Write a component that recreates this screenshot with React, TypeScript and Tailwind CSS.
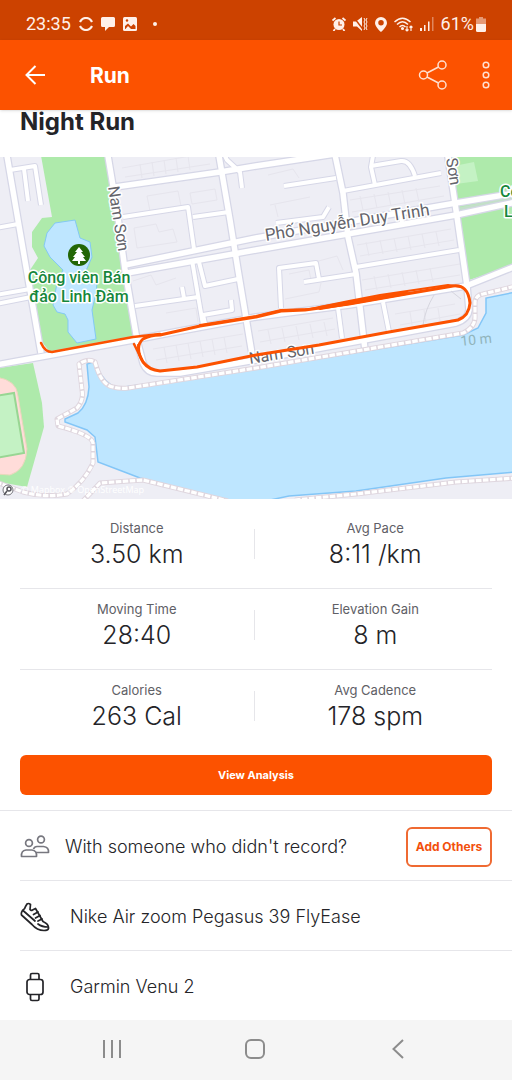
import type { ReactNode } from 'react'

type Stat = {
	label: string;
	value: string;
}

const stats: [Stat, Stat][] = [
	[{ label: 'Distance', value: '3.50 km' }, { label: 'Avg Pace', value: '8:11 /km' }],
	[{ label: 'Moving Time', value: '28:40' }, { label: 'Elevation Gain', value: '8 m' }],
	[{ label: 'Calories', value: '263 Cal' }, { label: 'Avg Cadence', value: '178 spm' }],
]

const wideRoads = [
	'M6 150L30 290L41 353',
	'M107 150L117 210L125 270L137 340',
	'M447 150L456 210L467 286',
	'M334 150L343 193L348 237L356 273L365 350',
	'M218 150L230 220L238 270L252 354',
	'M125 265L256 238L456 203L516 193',
	'M127 273L256 250L456 215L516 202',
	'M-4 365L40 357L133 340L180 331L256 317L349 305L466 286L516 266',
	'M137 340L143 363Q147 373 157 373L180 373L256 360L456 323Q468 319 469 310L467 286',
	'M115 187L220 172L256 166L335 154',
]

const narrowRoads = [
	'M-4 295L30 289', 'M-4 304L31 297', 'M-4 228L18 224',
	'M10 170L35 166L41 205', 'M24 169L28 201',
	'M123 217L188 207L194 249', 'M193 217L229 212',
	'M192 260L203 325', 'M199 262L205 286L238 279',
	'M135 306L198 297', 'M182 287L184 298', 'M203 315L232 310L231 300',
	'M222 150L227 160L240 172L242 188',
	'M284 186L336 178', 'M343 191L441 173',
	'M374 150L371 167L375 185', 'M371 166L401 161Q410 160 415 176',
	'M276 223L323 217L329 207', 'M401 212L402 223',
	'M356 267L459 250', 'M304 282L356 274', 'M281 308L279 268L316 263L319 279',
	'M338 308L342 338', 'M383 302L389 332', 'M203 315L206 328',
]

const footpaths = [
	'M-4 482L23 492Q45 498 67 494Q84 482 93 463V443Q92 435 58 426L57 419L77 408Q84 400 82 390L79 364Q88 358 95 362Q101 385 113 387Q120 389 128 388L256 368L463 333Q476 327 475 315V302Q476 295 483 294L516 286',
	'M82 502L100 483L143 480L228 501',
	'M295 500L356 494L456 482L516 478',
]

// Building outlines, drawn as slanted rows of small plots
const blocks = [
	'M122 168l80-14M125 177l85-13M140 164l2 14M152 162l2 14M164 160l2 14M176 158l2 14M188 156l2 14',
	'M147 196l31-5l3 15M147 196l3 15M190 193l25-4l2 11l-25 4z',
	'M134 228l22-4l3 8l14-3l4 13l-40 6z',
	'M133 281l18-6l5 10l20-7M166 313l30-5l2 14',
	'M268 175l25-6l6 9M270 205l40-8M275 205l3 12',
	'M350 200l90-14M352 212l92-16M360 196l3 14M374 194l3 14M388 192l3 14M402 190l3 14M416 188l3 14',
	'M357 245l94-16M360 256l94-16M366 242l3 14M380 240l3 14M394 238l3 14M408 236l3 14M422 234l3 14M436 232l3 14',
	'M362 280l98-16M365 290l95-15M374 276l3 14M388 274l3 14M402 272l3 14M416 270l3 14M430 268l3 14',
	'M153 349l90-15M156 360l86-14M164 347l3 16M176 345l3 16M188 343l3 16M200 341l3 16M212 339l3 16M224 337l3 16',
	'M258 331l75-13M260 342l75-13M268 330l3 14M282 328l3 14M296 326l3 14M310 324l3 14M324 322l3 14',
	'M289 274l20-4l2 10M285 299l34-7l2-9M315 262l22-6l6 14',
	'M395 314l60-10M400 325l60-11M410 312l2 13M424 310l2 13M438 308l2 13',
]

const park = 'M40 150H104L117 210L137 337L50 352L42 342L28 273L38 258L32 247V232L42 218L52 217Z'
const pond = 'M55 223L75 220L80 238L90 242L92 257L85 273L97 283L96 293L92 310L96 339L77 343L68 332V320L65 314L57 312L53 305L57 283L63 270L50 257L44 246L47 233Z'
const lake = 'M87 364L93 362L97 367Q104 383 117 388L256 369L463 335L478 328L486 313V298L516 292V472L446 478L356 491L289 496L256 503H240L140 478L127 473L98 462L95 437L87 430L65 422V419L78 413Q88 405 89 387Z'

function RouteMap() {
	return (
		<svg viewBox="0 157 512 342" className="block w-full" role="img" aria-label="Route map">
			<rect y="157" width="512" height="342" fill="#eeeef5" />
			<g fill="none" stroke="#e6e5ed" strokeWidth="1">
				{blocks.map(d => <path key={d} d={d} />)}
			</g>
			<path d={park} fill="#aeeaab" />
			<path d="M452 150H516V265L469 280L456 205Z" fill="#aeeaab" />
			<path d="M456 208L516 196V200L457 212Z" fill="#c3dfc9" />
			<path d="M454 166L474 162L478 181L456 184Z" fill="#c4f2c4" />
			<path d={pond} fill="#bee6ff" stroke="#83c9f3" strokeWidth="1" />
			<path d="M-2 368L33 363L42 403L44 427L27 487L-2 482Z" fill="#aeeaab" />
			<path d="M-4 377Q17 380 18 396L27 449Q26 470 10 475L-4 474Z" fill="#ffdcd9" stroke="#e8d7ba" strokeWidth="1" />
			<path d="M-4 396L14 393L24 453L-4 458Z" fill="#c4f2c4" stroke="#98d693" strokeWidth="2" />
			<path d={lake} fill="#bee6ff" stroke="#83c6f7" strokeWidth="1.5" />

			<g fill="none" stroke="#d6d7e7" strokeLinejoin="round">
				<g strokeWidth="6">{narrowRoads.map(d => <path key={d} d={d} />)}</g>
				<g strokeWidth="8">{wideRoads.map(d => <path key={d} d={d} />)}</g>
			</g>
			<g fill="none" stroke="#fff" strokeLinejoin="round">
				<g strokeWidth="4">{narrowRoads.map(d => <path key={d} d={d} />)}</g>
				<g strokeWidth="5.5">{wideRoads.map(d => <path key={d} d={d} />)}</g>
			</g>
			<g fill="none" strokeLinejoin="round">
				<g stroke="#dfd6de" strokeWidth="5">{footpaths.map(d => <path key={d} d={d} />)}</g>
				<g stroke="#fff" strokeWidth="3.2" strokeDasharray="5.5 1.5">{footpaths.map(d => <path key={d} d={d} />)}</g>
			</g>
			<path d="M434 295Q425 310 423 325M451 291L461 299" fill="none" stroke="#d6d6df" strokeWidth="1" />

			<g fontFamily="Roboto, sans-serif" fontSize="16" fill="#64646b" stroke="#fff" strokeWidth="3" strokeLinejoin="round" paintOrder="stroke">
				<text transform="translate(108 187) rotate(81)">Nam Sơn</text>
				<text transform="translate(266 241) rotate(-9)" fontSize="17">Phố Nguyễn Duy Trinh</text>
				<text transform="translate(440 121) rotate(81)">Nam Sơn</text>
				<text transform="translate(250 364) rotate(-9)">Nam Sơn</text>
				<g fill="#16873b" fontWeight="500" textAnchor="middle">
					<text x="79" y="283">Công viên Bán</text>
					<text x="79" y="302">đảo Linh Đàm</text>
					<text x="500" y="197" textAnchor="start">Công viên</text>
					<text x="504" y="217" textAnchor="start">Linh Đàm</text>
				</g>
			</g>
			<text transform="translate(461 346) rotate(-6)" fontFamily="Roboto, sans-serif" fontSize="14" fill="#91b4bb">10 m</text>

			<circle cx="79" cy="255" r="11" fill="#236605" />
			<path d="M79 247l4 5h-2l4 5h-2l3 4h-6v3h-2v-3h-6l3-4h-2l4-5h-2z" fill="#fff" />

			<g fill="none" stroke="#fc5200" strokeLinecap="round" strokeLinejoin="round">
				<path d="M41 343Q45 352 52 352L133 337L160 334" strokeWidth="2.5" />
				<path d="M134 344L142 360" strokeWidth="2.5" />
				<path d="M160 335L200 326L256 317L281 311L305 310L349 304L406 294L453 286Q468 284 470 303Q469 316 458 320L389 332L319 345L256 355L197 367L160 371Q149 370 143 362Q134 347 143 339Q150 335 160 335Z" strokeWidth="3" />
				<path d="M138 345Q139 360 147 366" strokeWidth="2" />
				<path d="M200 325L256 316L281 310L310 309L349 301L380 295L448 285L462 287" strokeWidth="2" />
				<path d="M320 308L349 303L406 293" strokeWidth="4" />
			</g>

			<circle cx="8" cy="490" r="5" fill="#fff" stroke="#76767d" strokeWidth="1" />
			<circle cx="9" cy="489" r="2" fill="none" stroke="#55555c" strokeWidth="1.5" />
			<path d="M4 495l3-4" stroke="#55555c" strokeWidth="1.5" />
			<text x="21" y="493" fontFamily="'Open Sans', sans-serif" fontSize="9" fill="#fff">© Mapbox © OpenStreetMap</text>
		</svg>
	)
}

function StatusBar() {
	return (
		<div className="flex h-10 items-center justify-between bg-[#cc4200] pt-2 pr-[26px] pl-[26px] font-[Roboto,sans-serif] text-lg text-[#fff0e9]">
			<div className="flex items-center gap-2">
				<span>23:35</span>
				<svg viewBox="0 0 14 14" className="size-3.5" fill="none" stroke="currentColor" strokeWidth="2.2">
					<path d="M1 5Q3 1 7 1T13 5M1 9Q3 13 7 13T13 9" />
				</svg>
				<svg viewBox="0 0 14 14" className="size-3.5" fill="currentColor">
					<path d="M1.500 0h11Q14 0 14 1.500v7Q14 10 12.500 10H8l-4 4v-4H1.500Q0 10 0 8.500v-7Q0 0 1.500 0z" />
				</svg>
				<svg viewBox="0 0 14 14" className="size-3.5">
					<rect width="14" height="14" rx="1.500" fill="currentColor" />
					<path d="M2 9L5 6.500L8 9.500L10.500 7L12.500 9V12H2Z" fill="#cc4200" />
					<path d="M2.500 12L5 9L8 12Z" fill="currentColor" />
					<circle cx="4" cy="3.500" r="1.200" fill="#cc4200" />
				</svg>
				<span className="ml-2 size-1 rounded-full bg-current" />
			</div>
			<div className="flex items-center gap-[7px]">
				<svg viewBox="0 0 14 14" className="size-3.5" fill="currentColor">
					<circle cx="7" cy="7.500" r="5.500" />
					<path d="M.5 3.500L3.500 1M13.500 3.500L10.500 1M3 12l-1.500 2M11 12l1.500 2" stroke="currentColor" strokeWidth="1.800" />
					<path d="M7 4.500V8h3" fill="none" stroke="#cc4200" strokeWidth="1.200" />
				</svg>
				<svg viewBox="0 0 15 14" className="h-3.5 w-[15px]" fill="currentColor">
					<path d="M0 4.500h3L9 0v14L4 9.500H0z" />
					<path d="M.5 0L10.500 13" stroke="#cc4200" strokeWidth="1.500" />
					<path d="M11 1l1 2l-1 2l1 2l-1 2l1 2l-1 2M14 1l-1 2l1 2l-1 2l1 2l-1 2l1 2" fill="none" stroke="currentColor" />
				</svg>
				<svg viewBox="0 0 12 15" className="h-[15px] w-3" fill="currentColor">
					<path d="M6 0a6 6 0 0 1 6 6c0 4-6 9-6 9S0 10 0 6a6 6 0 0 1 6-6zm0 3a2.600 2.600 0 1 0 0 5.500A2.600 2.600 0 0 0 6 3z" />
				</svg>
				<svg viewBox="0 0 19 15" className="h-[15px] w-[19px]" fill="none" stroke="currentColor" strokeWidth="1.500">
					<path d="M.5 5Q8.500-2.500 16.500 5M3 7.500Q8.500 2 14 7.500M5.500 10Q8.500 7 11.500 10" />
					<circle cx="8.500" cy="11.500" r=".8" />
					<path d="M13 9v5M11.500 12.500L13 14l1.500-1.500M17 14V9M15.500 10.500L17 9l1.500 1.500" strokeWidth="1.200" />
				</svg>
				<svg viewBox="0 0 14 14" className="size-3.5" fill="currentColor">
					<path d="M0 11h2v3H0zM4 8h1.500v6H4zM8 4.500h1.500V14H8z" />
					<path d="M12 0h1.500v14H12z" opacity=".4" />
				</svg>
				<span className="flex items-center gap-0.5">
					61%
					<svg viewBox="0 0 10 15" className="h-[15px] w-2.5" fill="currentColor">
						<path d="M3 0h4v1.500h3V7H0V1.500h3z" opacity=".5" />
						<path d="M0 7h10v6.500Q10 15 8.500 15h-7Q0 15 0 13.500z" />
					</svg>
				</span>
			</div>
		</div>
	)
}

function AppBar() {
	return (
		<header className="relative flex h-[70px] items-center bg-[#fc5200] pr-5 pl-6 text-white shadow-sm">
			<button type="button" aria-label="Back">
				<svg viewBox="0 0 22 20" className="h-5 w-[22px]" fill="none" stroke="currentColor" strokeWidth="2">
					<path d="M21 10H2.500M11.500 1L2.500 10L11.500 19" />
				</svg>
			</button>
			<h1 className="ml-11 flex-1 pt-0.5 text-[21px] font-bold">Run</h1>
			<button type="button" aria-label="Share" className="mr-[34px]">
				<svg viewBox="0 0 30 30" className="size-[30px] text-[#ffe0d0]" fill="none" stroke="currentColor" strokeWidth="1.500">
					<circle cx="5.500" cy="15" r="4" />
					<circle cx="24" cy="5" r="4" />
					<circle cx="24" cy="25" r="4" />
					<path d="M9 13L20.500 7M9 17L20.500 23" />
				</svg>
			</button>
			<button type="button" aria-label="More options" className="mr-0.5">
				<svg viewBox="0 0 8 28" className="h-7 w-2 text-[#ffe0d0]" fill="none" stroke="currentColor" strokeWidth="1.500">
					<circle cx="4" cy="4" r="2.800" />
					<circle cx="4" cy="14" r="2.800" />
					<circle cx="4" cy="24" r="2.800" />
				</svg>
			</button>
		</header>
	)
}

function StatCell({ label, value }: Stat) {
	return (
		<div className="flex-1 text-center">
			<dt className="text-[13px] leading-5 text-[#606066]">{label}</dt>
			<dd className="text-[25px] leading-8 font-light text-[#242428]">{value}</dd>
		</div>
	)
}

function GearRow({ icon, children }: { icon: ReactNode; children: ReactNode }) {
	return (
		<li className="ml-5 flex h-[70px] items-center gap-5 border-t border-[#e6e6ea] pt-0.5">
			{icon}
			<span>{children}</span>
		</li>
	)
}

export default function App() {
	return (
		<div className="flex min-h-screen flex-col bg-white font-[Inter,'Noto_Sans',sans-serif] text-[#242428]">
			<StatusBar />
			<AppBar />
			<main className="flex-1">
				<h2 className="px-5 pb-[23px] text-2xl leading-6 font-bold">Night Run</h2>
				<RouteMap />

				<section className="px-5 pt-[9px]">
					<div className="divide-y divide-[#e6e6ea]">
						{stats.map(([left, right]) => (
							<dl key={left.label} className="flex items-center pt-2.5 pb-[18px]">
								<StatCell {...left} />
								<div className="mr-1 h-[30px] w-px bg-[#e6e6ea]" />
								<StatCell {...right} />
							</dl>
						))}
					</div>
					<button type="button" className="mt-[5px] mb-[15px] h-10 w-full rounded-md bg-[#fc5200] text-[11px] font-bold text-white">
						View Analysis
					</button>
				</section>

				<ul className="text-lg font-light">
					<li className="flex h-[70px] items-center border-t border-[#e6e6ea] px-5 pt-0.5">
						<svg viewBox="0 0 30 24" className="h-6 w-[30px] shrink-0 text-[#77777f]" fill="none" stroke="currentColor" strokeWidth="1.700">
							<circle cx="9" cy="8" r="3.400" />
							<circle cx="21" cy="4.500" r="3.400" />
							<path d="M1.500 21.500Q1 15.500 6 15H12Q17 15.500 16.500 21.500Z" strokeLinejoin="round" />
							<path d="M13.500 14Q14.500 11.500 17 11.500H23.500Q29 12 28.500 17.500H16" strokeLinejoin="round" />
						</svg>
						<span className="ml-[15px] flex-1">With someone who didn't record?</span>
						<button type="button" className="h-10 w-[86px] rounded-md border-2 border-[#ef6a32] text-xs font-bold text-[#f2500c]">
							Add Others
						</button>
					</li>
					<GearRow
						icon={
							<svg viewBox="0 0 30 30" className="size-[30px] shrink-0" fill="none" stroke="currentColor" strokeWidth="1.700" strokeLinecap="round" strokeLinejoin="round">
								<path d="M5.500 4.500L7 2Q8.500 .8 10.500 2.500L10 7.500Q11 9 12.500 8L15.500 6.500L23 19.500Q29 22 28.500 26.500Q28 28.500 24 28.500Q17 28.500 12 22.500L1.500 13Q.8 11 2.500 8.500Q5 7 5.500 4.500Z" />
								<path d="M3 8.500L15 19M18 22Q22 25 28 25" />
								<path d="M13.500 12.500l4.500-2.500M15.500 16l4.500-2.500M18 19l4-2" />
							</svg>
						}
					>
						Nike Air zoom Pegasus 39 FlyEase
					</GearRow>
					<GearRow
						icon={
							<svg viewBox="0 0 30 30" className="size-[30px] shrink-0" fill="none" stroke="currentColor" strokeWidth="1.700" strokeLinejoin="round">
								<rect x="7" y="7.500" width="16" height="15" rx="2.500" />
								<path d="M10.500 7.500V3Q10.500 1.500 12 1.500H17.500Q19 1.500 19 3V7.500M10.500 22.500V27Q10.500 28.500 12 28.500H17.500Q19 28.500 19 27V22.500" />
							</svg>
						}
					>
						Garmin Venu 2
					</GearRow>
				</ul>
			</main>

			<nav className="flex h-[60px] items-center justify-around bg-[#f5f5f5] pr-[43px] pb-0.5 pl-10 text-[#8c8c8c]">
				<button type="button" aria-label="Recent apps">
					<svg viewBox="0 0 20 20" className="size-5" fill="none" stroke="currentColor" strokeWidth="2">
						<path d="M2 1v18M10 1v18M18 1v18" />
					</svg>
				</button>
				<button type="button" aria-label="Home">
					<svg viewBox="0 0 20 20" className="size-5" fill="none" stroke="currentColor" strokeWidth="2">
						<rect x="1" y="1" width="18" height="18" rx="5" />
					</svg>
				</button>
				<button type="button" aria-label="Back to previous app">
					<svg viewBox="0 0 20 20" className="size-5" fill="none" stroke="currentColor" strokeWidth="2">
						<path d="M15 1L5.500 10L15 19" />
					</svg>
				</button>
			</nav>
		</div>
	)
}
